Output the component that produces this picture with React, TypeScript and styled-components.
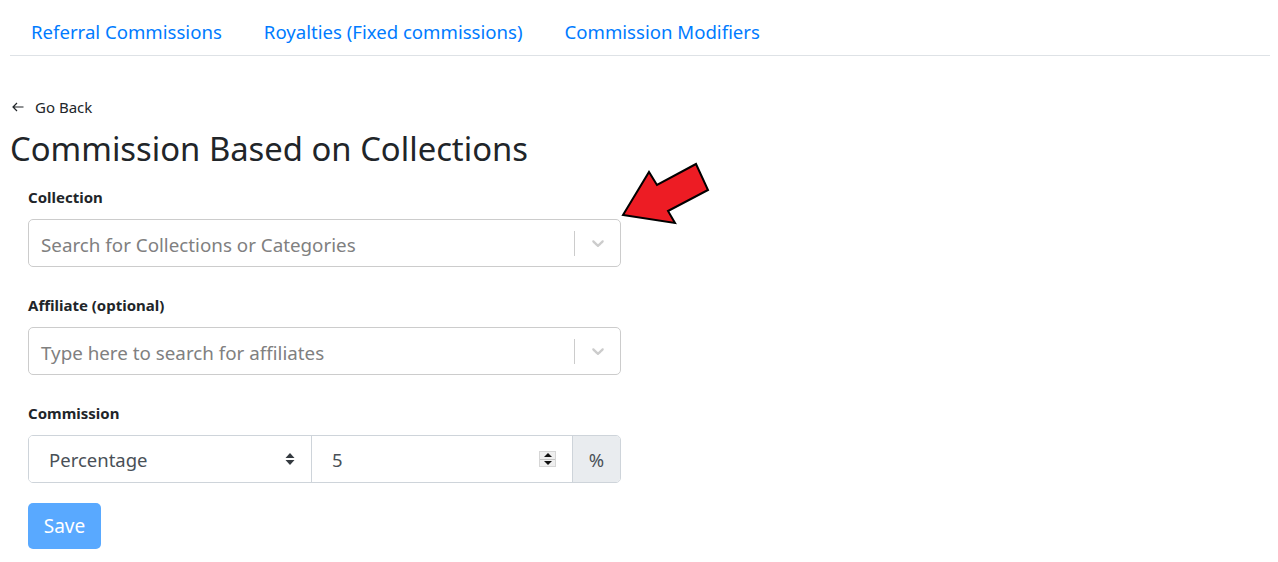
import React from 'react';
import styled, { createGlobalStyle } from 'styled-components';

const GlobalStyle = createGlobalStyle`
  body {
    margin: 0;
    background: #fff;
    font-family: "Noto Sans", "Open Sans", Arial, sans-serif;
    color: #212529;
  }
`;

const Page = styled.div`
  padding: 7px 8px 0 10px;
  position: relative;
  min-height: 555px;
  box-sizing: border-box;
`;

const Tabs = styled.nav`
  display: flex;
  border-bottom: 1px solid #dee2e6;
`;

const TabLink = styled.a`
  padding: 10px 21px 8px 21px;
  font-size: 18.6px;
  line-height: 30px;
  color: #007bff;
  text-decoration: none;
  cursor: pointer;
`;

const BackLink = styled.a`
  display: flex;
  align-items: center;
  gap: 11px;
  margin-top: 40px;
  padding-left: 2px;
  font-size: 15px;
  line-height: 22px;
  color: #212529;
  text-decoration: none;
`;

const Title = styled.h2`
  margin: 7px 0 13px;
  font-size: 32.8px;
  font-weight: 400;
  line-height: 48px;
`;

const Form = styled.form`
  width: 593px;
  margin-left: 18px;
`;

const Field = styled.div<{ $last?: boolean }>`
  margin-bottom: ${(p) => (p.$last ? '0' : '27px')};
`;

const Label = styled.label`
  display: block;
  font-size: 15px;
  font-weight: 700;
  line-height: 22px;
  margin-bottom: 11px;
`;

const SelectBox = styled.div`
  display: flex;
  align-items: center;
  height: 48px;
  border: 1px solid #cccccc;
  border-radius: 5px;
  box-sizing: border-box;
`;

const Placeholder = styled.div`
  flex: 1;
  padding: 3px 0 0 12px;
  font-size: 18.8px;
  color: #808080;
`;

const Separator = styled.span`
  width: 1px;
  height: 25px;
  background: #cccccc;
`;

const Indicator = styled.span`
  display: flex;
  width: 45px;
  justify-content: center;
  color: #cccccc;
`;

const InputGroup = styled.div`
  display: flex;
  height: 48px;
  border: 1px solid #ced4da;
  border-radius: 5px;
  overflow: hidden;
  box-sizing: border-box;
`;

const GroupCell = styled.div<{ $width?: number; $addon?: boolean }>`
  display: flex;
  align-items: center;
  width: ${(p) => (p.$width ? `${p.$width}px` : 'auto')};
  flex: ${(p) => (p.$width ? 'none' : 1)};
  padding: ${(p) => (p.$addon ? '0' : '0 16px 0 20px')};
  justify-content: ${(p) => (p.$addon ? 'center' : 'space-between')};
  background: ${(p) => (p.$addon ? '#e9ecef' : '#fff')};
  border-left: 1px solid #ced4da;
  font-size: 18.5px;
  color: #495057;
  box-sizing: border-box;

  &:first-child {
    border-left: none;
  }
`;

const Spinner = styled.span`
  display: flex;
  flex-direction: column;
  width: 17px;
  height: 16px;
  border: 1px solid #d6d6d6;
  background: #efefef;
  box-sizing: border-box;
`;

const SpinHalf = styled.span<{ $down?: boolean }>`
  flex: 1;
  display: flex;
  align-items: center;
  justify-content: center;
  border-top: ${(p) => (p.$down ? '1px solid #c4c4c4' : 'none')};

  &::after {
    content: '';
    border-left: 4px solid transparent;
    border-right: 4px solid transparent;
    ${(p) => (p.$down ? 'border-top: 4px solid #111;' : 'border-bottom: 4px solid #111;')}
  }
`;

const SaveButton = styled.button`
  width: 73px;
  height: 46px;
  margin-top: 20px;
  border: none;
  border-radius: 5px;
  background: #59a9ff;
  color: #fff;
  font-family: inherit;
  font-size: 19px;
  padding: 0;
`;

const Arrow = styled.svg`
  position: absolute;
  left: 618px;
  top: 160px;
`;

const Chevron = () => (
  <svg width="20" height="20" viewBox="0 0 20 20" fill="currentColor">
    <path d="M4.516 7.548c0.436-0.446 1.043-0.481 1.576 0l3.908 3.747 3.908-3.747c0.533-0.481 1.141-0.446 1.574 0 0.436 0.445 0.408 1.197 0 1.615-0.406 0.418-4.695 4.502-4.695 4.502-0.217 0.223-0.502 0.335-0.787 0.335s-0.57-0.112-0.789-0.335c0 0-4.287-4.084-4.695-4.502s-0.436-1.170 0-1.615z" />
  </svg>
);

const Carets = () => (
  <svg width="10" height="14" viewBox="0 0 10 14" fill="#343a40">
    <path d="M5 1L9.5 6H0.5z" />
    <path d="M5 13L9.5 8H0.5z" />
  </svg>
);

const App: React.FC = () => {
  return (
    <Page>
      <GlobalStyle />
      <Tabs>
        <TabLink>Referral Commissions</TabLink>
        <TabLink>Royalties (Fixed commissions)</TabLink>
        <TabLink>Commission Modifiers</TabLink>
      </Tabs>
      <BackLink>
        <svg width="12" height="10" viewBox="0 0 12 10" fill="none" stroke="#212529" strokeWidth="1.2">
          <path d="M11.5 5H1M5 1L1 5l4 4" />
        </svg>
        Go Back
      </BackLink>
      <Title>Commission Based on Collections</Title>
      <Form>
        <Field>
          <Label>Collection</Label>
          <SelectBox>
            <Placeholder>Search for Collections or Categories</Placeholder>
            <Separator />
            <Indicator>
              <Chevron />
            </Indicator>
          </SelectBox>
        </Field>
        <Field>
          <Label>Affiliate (optional)</Label>
          <SelectBox>
            <Placeholder>Type here to search for affiliates</Placeholder>
            <Separator />
            <Indicator>
              <Chevron />
            </Indicator>
          </SelectBox>
        </Field>
        <Field $last>
          <Label>Commission</Label>
          <InputGroup>
            <GroupCell $width={282}>
              Percentage
              <Carets />
            </GroupCell>
            <GroupCell>
              5
              <Spinner>
                <SpinHalf />
                <SpinHalf $down />
              </Spinner>
            </GroupCell>
            <GroupCell $width={48} $addon>%</GroupCell>
          </InputGroup>
        </Field>
        <SaveButton type="button">Save</SaveButton>
      </Form>
      <Arrow width="100" height="70" viewBox="618 160 100 70">
        <polygon
          points="623,215 649,172 657,185 696,164 708,190 668,211 675,223"
          fill="#ed1c24"
          stroke="#000"
          strokeWidth="2"
          strokeLinejoin="miter"
        />
      </Arrow>
    </Page>
  );
};

export default App;
